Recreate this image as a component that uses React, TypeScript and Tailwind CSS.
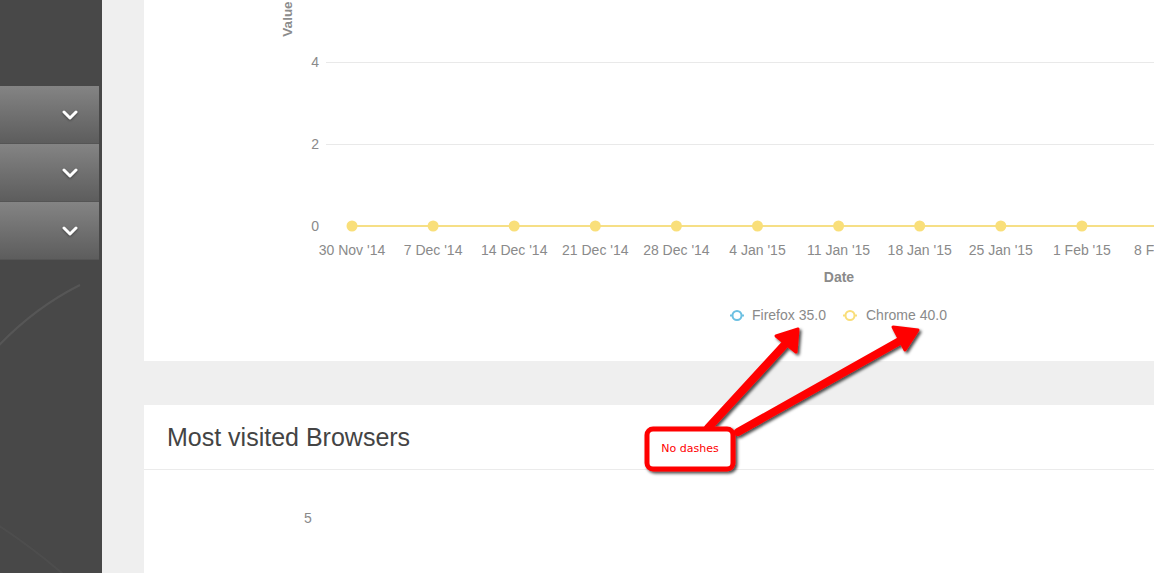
import React from "react";

const DATES = [
  "30 Nov '14",
  "7 Dec '14",
  "14 Dec '14",
  "21 Dec '14",
  "28 Dec '14",
  "4 Jan '15",
  "11 Jan '15",
  "18 Jan '15",
  "25 Jan '15",
  "1 Feb '15",
  "8 Feb '15",
];

const Chevron = () => (
  <svg width="16" height="10" viewBox="0 0 16 10" className="drop-shadow-[0_1px_1px_rgba(0,0,0,0.4)]">
    <path d="M2 2 L8 8 L14 2" fill="none" stroke="#fff" strokeWidth="3" strokeLinecap="round" strokeLinejoin="round" />
  </svg>
);

const SideItem = () => (
  <div className="h-[58px] w-[99px] flex items-center justify-end pr-[21px] bg-gradient-to-b from-[#848484] to-[#5d5d5d] border-b border-[#555]">
    <Chevron />
  </div>
);

// chart geometry is in card coordinates (card starts at x=144)
const X0 = 208;
const STEP = 81.1;

function LineChart() {
  return (
    <svg width="1010" height="361" className="block" style={{ fontFamily: "'Liberation Sans', Arial, sans-serif" }}>
      <text
        x="0"
        y="0"
        transform="translate(148 19) rotate(-90)"
        textAnchor="middle"
        fontSize="13.5"
        fontWeight="bold"
        fill="#8c8c8c"
      >
        Value
      </text>
      {[
        { v: "4", y: 62 },
        { v: "2", y: 144 },
        { v: "0", y: 226 },
      ].map((t) => (
        <g key={t.v}>
          {t.v !== "0" && <line x1="182" x2="1010" y1={t.y + 0.5} y2={t.y + 0.5} stroke="#e9e9e9" strokeWidth="1" />}
          <text x="175" y={t.y + 5} textAnchor="end" fontSize="14" fill="#8a8a8a">
            {t.v}
          </text>
        </g>
      ))}
      <line x1={X0} x2="1010" y1="226" y2="226" stroke="#f6df86" strokeWidth="2" />
      {DATES.map((d, i) => (
        <g key={d}>
          <circle cx={X0 + i * STEP} cy="226" r="5.5" fill="#f9df7a" />
          <text x={X0 + i * STEP} y="255" textAnchor="middle" fontSize="14" fill="#8a8a8a">
            {d}
          </text>
        </g>
      ))}
      <text x="695" y="282" textAnchor="middle" fontSize="14" fontWeight="bold" fill="#8a8a8a">
        Date
      </text>
      <g>
        <line x1="586" x2="600" y1="315.5" y2="315.5" stroke="#6cc0e2" strokeWidth="2" />
        <circle cx="593" cy="315.5" r="4.5" fill="#fff" stroke="#6cc0e2" strokeWidth="2" />
        <text x="608" y="320" fontSize="14" fill="#8a8a8a">
          Firefox 35.0
        </text>
        <line x1="699" x2="713" y1="315.5" y2="315.5" stroke="#f9de7a" strokeWidth="2" />
        <circle cx="706" cy="315.5" r="4.5" fill="#fff" stroke="#f9de7a" strokeWidth="2" />
        <text x="722" y="320" fontSize="14" fill="#8a8a8a">
          Chrome 40.0
        </text>
      </g>
    </svg>
  );
}

function Annotation() {
  return (
    <div className="absolute inset-0 pointer-events-none">
      <svg width="1154" height="573" className="absolute left-0 top-0">
        <defs>
          <filter id="sh" x="-20%" y="-20%" width="140%" height="140%">
            <feDropShadow dx="2" dy="2" stdDeviation="1.5" floodColor="#000" floodOpacity="0.7" />
          </filter>
        </defs>
        <g filter="url(#sh)">
          <line x1="708" y1="428" x2="788" y2="341" stroke="#ff0000" strokeWidth="8" strokeLinecap="round" />
          <polygon points="798,329 796,352 776,336" fill="#ff0000" stroke="#ff0000" strokeWidth="3" strokeLinejoin="round" />
          <line x1="738" y1="432" x2="905" y2="338" stroke="#ff0000" strokeWidth="8" strokeLinecap="round" />
          <polygon points="918,330 905,350 893,327" fill="#ff0000" stroke="#ff0000" strokeWidth="3" strokeLinejoin="round" />
          <rect x="647" y="429" width="86" height="40" rx="6" fill="#fff" stroke="#ff0000" strokeWidth="5" />
        </g>
      </svg>
      <div
        className="absolute left-[647px] top-[429px] w-[86px] h-[40px] flex items-center justify-center text-[11px] text-[#ff0000]"
        style={{ fontFamily: "'DejaVu Sans', 'Open Sans', sans-serif" }}
      >
        No dashes
      </div>
    </div>
  );
}

export default function App() {
  return (
    <div
      className="relative w-[1154px] h-[573px] overflow-hidden flex bg-[#efefef]"
      style={{ fontFamily: "'Liberation Sans', Arial, sans-serif" }}
    >
      <aside className="relative w-[102px] shrink-0 bg-[#484848] pt-[86px] overflow-hidden">
        <svg width="102" height="573" className="absolute left-0 top-0">
          <path d="M-10 355 Q 30 310 80 285" fill="none" stroke="#5a5a5a" strokeWidth="2" opacity="0.8" />
          <path d="M-10 520 Q 30 545 70 580" fill="none" stroke="#525252" strokeWidth="2" opacity="0.6" />
        </svg>
        <div className="relative">
          <SideItem />
          <SideItem />
          <SideItem />
        </div>
      </aside>
      <main className="flex-1 pl-[42px] flex flex-col gap-[44px]">
        <section className="bg-white h-[361px] shrink-0">
          <LineChart />
        </section>
        <section className="bg-white flex-1">
          <div className="h-[65px] border-b border-[#ebebeb] flex items-center pl-[23px]">
            <h2 className="text-[25px] text-[#444] pt-[1px]">Most visited Browsers</h2>
          </div>
          <div className="pl-[160px] pt-[38px] text-[14px] text-[#8a8a8a]">5</div>
        </section>
      </main>
      <Annotation />
    </div>
  );
}
